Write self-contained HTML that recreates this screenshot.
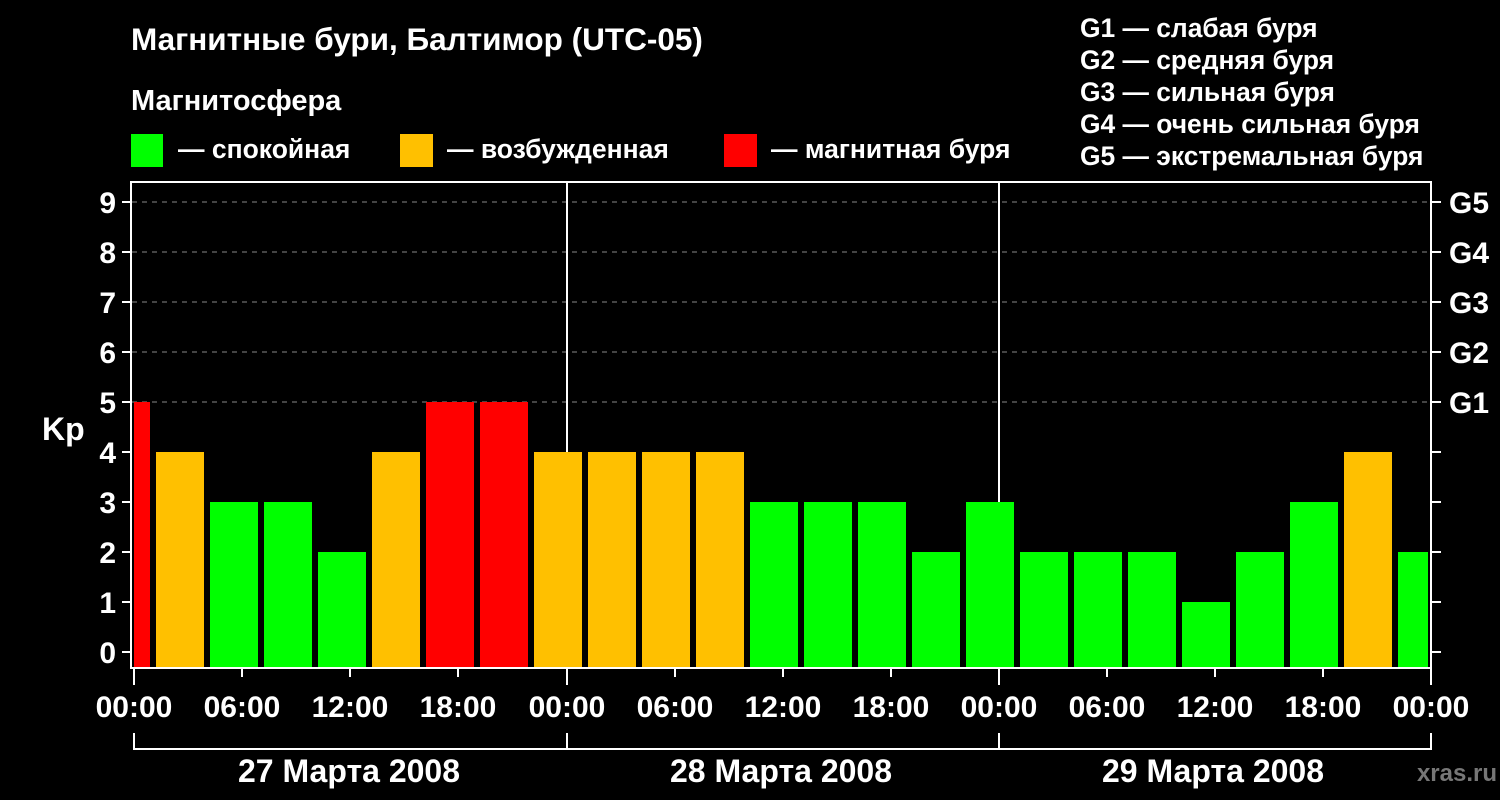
<!DOCTYPE html><html><head><meta charset="utf-8"><style>body{margin:0;background:#000}svg{display:block}text{font-family:"Liberation Sans",sans-serif;font-weight:bold;fill:#fff}</style></head><body>
<svg width="1500" height="800" viewBox="0 0 1500 800">
<rect width="1500" height="800" fill="#000"/>
<text x="131" y="50" font-size="31.5">Магнитные бури, Балтимор (UTC-05)</text>
<text x="131" y="110" font-size="29">Магнитосфера</text>
<rect x="131" y="134" width="32" height="33" fill="#00ff00"/><text x="178" y="158" font-size="26.5">— спокойная</text>
<rect x="400" y="134" width="33" height="33" fill="#ffc000"/><text x="447" y="158" font-size="26.5">— возбужденная</text>
<rect x="724" y="134" width="33" height="33" fill="#ff0000"/><text x="771" y="158" font-size="26.5">— магнитная буря</text>
<g font-size="26.4"><text x="1080" y="37">G1 — слабая буря</text><text x="1080" y="69">G2 — средняя буря</text><text x="1080" y="101">G3 — сильная буря</text><text x="1080" y="133">G4 — очень сильная буря</text><text x="1080" y="165">G5 — экстремальная буря</text></g>
<g stroke="#888" stroke-dasharray="5,5" stroke-width="1"><line x1="132" x2="1431" y1="202" y2="202"/><line x1="132" x2="1431" y1="252" y2="252"/><line x1="132" x2="1431" y1="302" y2="302"/><line x1="132" x2="1431" y1="352" y2="352"/><line x1="132" x2="1431" y1="402" y2="402"/></g>
<g>
<rect x="134" y="402" width="16" height="266" fill="#f00"/>
<rect x="156" y="452" width="48" height="216" fill="#ffc000"/>
<rect x="210" y="502" width="48" height="166" fill="#0f0"/>
<rect x="264" y="502" width="48" height="166" fill="#0f0"/>
<rect x="318" y="552" width="48" height="116" fill="#0f0"/>
<rect x="372" y="452" width="48" height="216" fill="#ffc000"/>
<rect x="426" y="402" width="48" height="266" fill="#f00"/>
<rect x="480" y="402" width="48" height="266" fill="#f00"/>
<rect x="534" y="452" width="48" height="216" fill="#ffc000"/>
<rect x="588" y="452" width="48" height="216" fill="#ffc000"/>
<rect x="642" y="452" width="48" height="216" fill="#ffc000"/>
<rect x="696" y="452" width="48" height="216" fill="#ffc000"/>
<rect x="750" y="502" width="48" height="166" fill="#0f0"/>
<rect x="804" y="502" width="48" height="166" fill="#0f0"/>
<rect x="858" y="502" width="48" height="166" fill="#0f0"/>
<rect x="912" y="552" width="48" height="116" fill="#0f0"/>
<rect x="966" y="502" width="48" height="166" fill="#0f0"/>
<rect x="1020" y="552" width="48" height="116" fill="#0f0"/>
<rect x="1074" y="552" width="48" height="116" fill="#0f0"/>
<rect x="1128" y="552" width="48" height="116" fill="#0f0"/>
<rect x="1182" y="602" width="48" height="66" fill="#0f0"/>
<rect x="1236" y="552" width="48" height="116" fill="#0f0"/>
<rect x="1290" y="502" width="48" height="166" fill="#0f0"/>
<rect x="1344" y="452" width="48" height="216" fill="#ffc000"/>
<rect x="1398" y="552" width="30" height="116" fill="#0f0"/>
</g>
<g stroke="#fff" stroke-width="2" fill="none">
<rect x="131" y="182" width="1300" height="486"/>
<line x1="567" y1="182" x2="567" y2="452"/><line x1="999" y1="182" x2="999" y2="502"/>
<path d="M122 202h9M122 252h9M122 302h9M122 352h9M122 402h9M122 452h9M122 502h9M122 552h9M122 602h9M122 652h9"/>
<path d="M1431 202h10M1431 252h10M1431 302h10M1431 352h10M1431 402h10M1431 452h10M1431 502h10M1431 552h10M1431 602h10M1431 652h10"/>
<path d="M134 668v17M567 668v17M999 668v17M1431 668v17"/>
<path d="M242 668v9M350 668v9M458 668v9M675 668v9M783 668v9M891 668v9M1107 668v9M1215 668v9M1323 668v9"/>
<path d="M134 733v16H1431v-16M567 733v16M999 733v16"/>
</g>
<g font-size="30" text-anchor="end"><text x="116" y="213">9</text><text x="116" y="263">8</text><text x="116" y="313">7</text><text x="116" y="363">6</text><text x="116" y="413">5</text><text x="116" y="463">4</text><text x="116" y="513">3</text><text x="116" y="563">2</text><text x="116" y="613">1</text><text x="116" y="663">0</text></g>
<text x="42" y="440" font-size="32">Kp</text>
<g font-size="30"><text x="1449" y="213">G5</text><text x="1449" y="263">G4</text><text x="1449" y="313">G3</text><text x="1449" y="363">G2</text><text x="1449" y="413">G1</text></g>
<g font-size="30" text-anchor="middle"><text x="134" y="717">00:00</text><text x="242" y="717">06:00</text><text x="350" y="717">12:00</text><text x="458" y="717">18:00</text><text x="567" y="717">00:00</text><text x="675" y="717">06:00</text><text x="783" y="717">12:00</text><text x="891" y="717">18:00</text><text x="999" y="717">00:00</text><text x="1107" y="717">06:00</text><text x="1215" y="717">12:00</text><text x="1323" y="717">18:00</text><text x="1431" y="717">00:00</text>
<text x="349" y="782" font-size="32">27 Марта 2008</text><text x="781" y="782" font-size="32">28 Марта 2008</text><text x="1213" y="782" font-size="32">29 Марта 2008</text></g>
<text x="1497" y="781" font-size="24" text-anchor="end" style="fill:#777">xras.ru</text>
</svg></body></html>
